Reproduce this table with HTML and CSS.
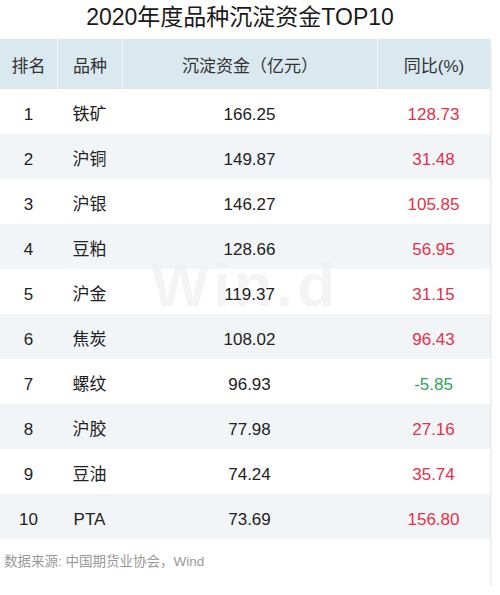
FILE: index.html
```html
<!DOCTYPE html>
<html lang="zh-CN">
<head>
<meta charset="utf-8">
<link rel="stylesheet" href="styles.css">
</head>
<body>
<div class="page">
  <h1 class="title">2020年度品种沉淀资金TOP10</h1>
  <div class="card">
    <div class="watermark">Win.d</div>
    <div class="row head">
      <div class="cell">排名</div>
      <div class="cell">品种</div>
      <div class="cell">沉淀资金（亿元）</div>
      <div class="cell">同比(%)</div>
    </div>
    <div class="row"><div class="cell">1</div><div class="cell">铁矿</div><div class="cell">166.25</div><div class="cell up">128.73</div></div>
    <div class="row alt"><div class="cell">2</div><div class="cell">沪铜</div><div class="cell">149.87</div><div class="cell up">31.48</div></div>
    <div class="row"><div class="cell">3</div><div class="cell">沪银</div><div class="cell">146.27</div><div class="cell up">105.85</div></div>
    <div class="row alt"><div class="cell">4</div><div class="cell">豆粕</div><div class="cell">128.66</div><div class="cell up">56.95</div></div>
    <div class="row"><div class="cell">5</div><div class="cell">沪金</div><div class="cell">119.37</div><div class="cell up">31.15</div></div>
    <div class="row alt"><div class="cell">6</div><div class="cell">焦炭</div><div class="cell">108.02</div><div class="cell up">96.43</div></div>
    <div class="row"><div class="cell">7</div><div class="cell">螺纹</div><div class="cell">96.93</div><div class="cell down">-5.85</div></div>
    <div class="row alt"><div class="cell">8</div><div class="cell">沪胶</div><div class="cell">77.98</div><div class="cell up">27.16</div></div>
    <div class="row"><div class="cell">9</div><div class="cell">豆油</div><div class="cell">74.24</div><div class="cell up">35.74</div></div>
    <div class="row alt"><div class="cell">10</div><div class="cell">PTA</div><div class="cell">73.69</div><div class="cell up">156.80</div></div>
    <div class="source">数据来源: 中国期货业协会，Wind</div>
  </div>
</div>
</body>
</html>
```
FILE: styles.css
```css
* { box-sizing: border-box; }
html, body { margin: 0; padding: 0; background: #fff; }
body {
  font-family: "Liberation Sans", "Noto Sans CJK SC", sans-serif;
  color: #222;
}
.page { width: 500px; }
.title {
  margin: 0;
  width: 480px;
  height: 39px;
  font-size: 23px;
  font-weight: normal;
  line-height: 35px;
  text-align: center;
  color: #1a1a1a;
}
.card {
  position: relative;
  width: 490px;
  background: #fff;
  box-shadow: 1px 1px 2px rgba(0,0,0,0.12);
}
.row {
  display: grid;
  grid-template-columns: 57px 65px 255px 113px;
  height: 45px;
  font-size: 17px;
  position: relative;
  z-index: 1;
}
.row.alt { background: rgba(236, 241, 244, 0.7); }
.row .cell { text-align: center; line-height: 45px; padding-top: 3px; }
.row.head {
  height: 50px;
  background: #dae8ef;
  color: #333;
}
.row.head .cell {
  line-height: 50px;
  padding-top: 3px;
  border-left: 1px solid #f2f7f9;
}
.row.head .cell:first-child { border-left: none; }
.up { color: #e6304a; }
.down { color: #2ea65a; }
.source {
  height: 47px;
  padding-left: 4px;
  font-size: 13.5px;
  line-height: 46px;
  color: #999;
}
.watermark {
  position: absolute;
  left: 151px;
  top: 210px;
  font-size: 62px;
  font-weight: bold;
  color: rgba(0,0,0,0.045);
  letter-spacing: 4px;
  z-index: 0;
  pointer-events: none;
}
```
